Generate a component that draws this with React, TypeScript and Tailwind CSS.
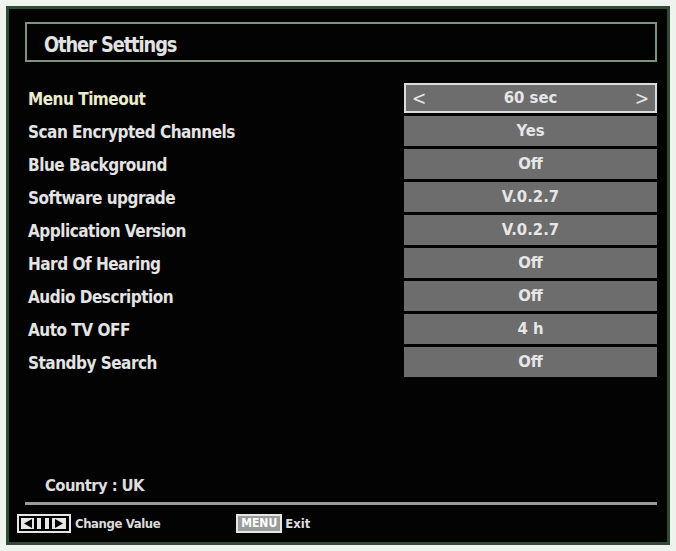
import * as React from "react";

const rows: { label: string; value: string }[] = [
  { label: "Menu Timeout", value: "60 sec" },
  { label: "Scan Encrypted Channels", value: "Yes" },
  { label: "Blue Background", value: "Off" },
  { label: "Software upgrade", value: "V.0.2.7" },
  { label: "Application Version", value: "V.0.2.7" },
  { label: "Hard Of Hearing", value: "Off" },
  { label: "Audio Description", value: "Off" },
  { label: "Auto TV OFF", value: "4 h" },
  { label: "Standby Search", value: "Off" },
];

const font = { fontFamily: '"DejaVu Sans Condensed", "DejaVu Sans", sans-serif' };

function ArrowKeys() {
  return (
    <svg width="54" height="19" viewBox="0 0 54 19">
      <rect x="1" y="1" width="52" height="17" fill="#000" stroke="#e6e6e6" strokeWidth="2" />
      <rect x="4" y="4" width="13" height="11" fill="#e6e6e6" />
      <path d="M15 5 L7 9.5 L15 14 Z" fill="#000" />
      <rect x="20" y="4" width="4" height="11" fill="#e6e6e6" />
      <rect x="28" y="4" width="4" height="11" fill="#e6e6e6" />
      <rect x="35" y="4" width="14" height="11" fill="#e6e6e6" />
      <path d="M38 5 L46 9.5 L38 14 Z" fill="#000" />
    </svg>
  );
}

export default function App() {
  return (
    <div className="w-[676px] h-[551px] bg-[#eef3ee] p-[6px]" style={font}>
      <div className="flex h-full flex-col border-[3px] border-[#2f4b35] bg-[#030303] pt-[13px] pl-[16px] pr-[10px]">
        {/* header */}
        <div className="flex h-[40px] items-center border-2 border-[#7d927f] pl-[17px] pt-[4px]">
          <span className="origin-left text-[22px] font-bold tracking-[-1.2px] text-[#e2e2e2] [transform:scaleX(0.9)]">
            Other Settings
          </span>
        </div>

        {/* settings */}
        <div className="mt-[21px] flex flex-col gap-[3px] pl-[3px]">
          {rows.map((r, i) => (
            <div key={r.label} className="flex h-[30px] items-center justify-between">
              <span
                className={
                  "pt-[3px] text-[17px] font-bold tracking-[-0.5px] " +
                  (i === 0 ? "text-[#ecebcf]" : "text-[#e4e4e4]")
                }
              >
                {r.label}
              </span>
              {i === 0 ? (
                <div className="flex h-[30px] w-[253px] items-center justify-between border-2 border-[#dcdcdc] bg-[#6d6d6d] px-[6px] pt-[1px] text-[16.5px] font-bold text-[#e6e6e6]">
                  <span className="text-[19px] font-normal">&lt;</span>
                  <span>{r.value}</span>
                  <span className="text-[19px] font-normal">&gt;</span>
                </div>
              ) : (
                <div className="flex h-[30px] w-[253px] items-center justify-center bg-[#6d6d6d] pt-[1px] text-[16.5px] font-bold text-[#e6e6e6]">
                  {r.value}
                </div>
              )}
            </div>
          ))}
        </div>

        <div className="flex-1" />

        {/* country */}
        <div className="pl-[20px] text-[16.5px] font-bold tracking-[-0.6px] text-[#dedede]">
          Country : UK
        </div>
        <div className="mt-[3px] h-[3px] bg-[#9a9a9a]" />

        {/* footer */}
        <div className="flex h-[37px] items-center -ml-[8px] text-[13px] font-bold text-[#dcdcdc]">
          <ArrowKeys />
          <span className="ml-[4px] tracking-[-0.4px]">Change Value</span>
          <span className="ml-[76px] border-2 border-[#e6e6e6] bg-[#9b9b9b] px-[3px] text-[12px] leading-[15px] text-white">
            MENU
          </span>
          <span className="ml-[3px]">Exit</span>
        </div>
      </div>
    </div>
  );
}
